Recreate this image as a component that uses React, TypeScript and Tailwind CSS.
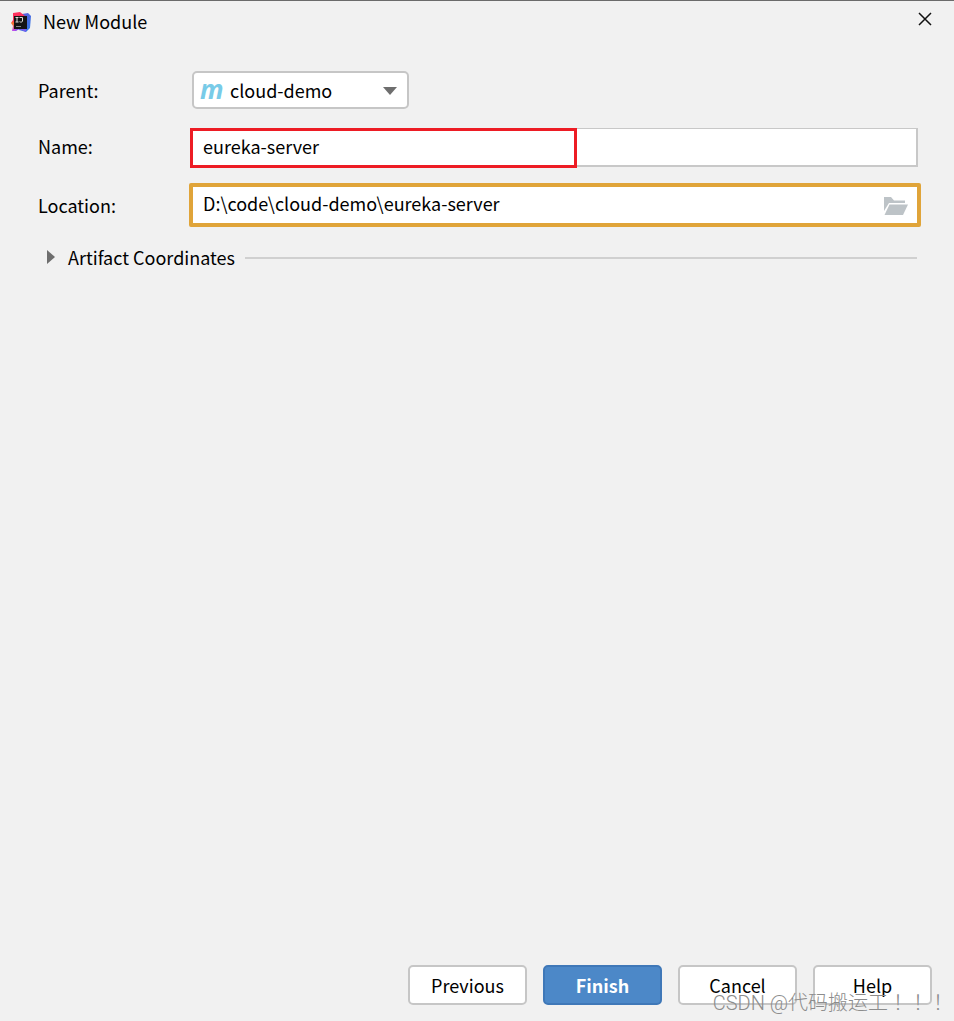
import { useState } from 'react'

const parents = ['cloud-demo']

const buttonBase = 'w-[119px] h-10 rounded-[5px] border-2 text-center leading-9'

function IdeaLogo() {
  return (
    <svg width="21" height="20" viewBox="0 0 21 20" aria-hidden="true">
      <defs>
        <linearGradient id="idea-blue" x1="0" y1="0" x2="1" y2="1">
          <stop offset="0" stopColor="#6b57d8" />
          <stop offset="1" stopColor="#2b7de9" />
        </linearGradient>
        <linearGradient id="idea-pink" x1="0" y1="0" x2="0" y2="1">
          <stop offset="0" stopColor="#fe315d" />
          <stop offset="0.45" stopColor="#fe315d" />
          <stop offset="0.6" stopColor="#f97a28" />
          <stop offset="1" stopColor="#b74af7" />
        </linearGradient>
      </defs>
      <path d="M11 2L17 1L20 4L19 16L15 20L8 18Z" fill="url(#idea-blue)" />
      <path d="M2 1L9 0L14 4L11 15L5 19L1 19L2 14L0 11L2 8Z" fill="url(#idea-pink)" />
      <path d="M4 19L6 15H15L15 20L9 17Z" fill="#7a5cf0" />
      <rect x="3" y="4" width="13" height="13" fill="#141414" />
      <path d="M4.5 5.5H7.5M6 5.5V10M4.5 10H7.5M8.5 5.5H11.5V9C11.5 10 10 10.5 8.5 9.7" fill="none" stroke="#ddd" strokeWidth="1" />
      <path d="M5 14.5H10" stroke="#888" strokeWidth="1" />
    </svg>
  )
}

function FolderIcon() {
  return (
    <svg width="24" height="18" viewBox="0 0 24 18" aria-hidden="true">
      <path d="M0 0H7L10 3.5H21V6H5L0 14Z" fill="#bdc3c7" />
      <path d="M5.5 7.5H24L19 18H0.5Z" fill="#bdc3c7" />
    </svg>
  )
}

export default function App() {
  const [name, setName] = useState('eureka-server')
  const [location, setLocation] = useState('D:\\code\\cloud-demo\\eureka-server')

  return (
    <div className="relative min-h-screen flex flex-col overflow-hidden border-t border-[#6b6b6b] bg-[#f1f1f1] font-['Noto_Sans_CJK_SC',sans-serif] text-[18px] leading-7 text-black">
      <header className="flex items-center h-[42px] pl-[11px] pr-[22px]">
        <IdeaLogo />
        <h1 className="ml-[11px] pb-0.5">New Module</h1>
        <button type="button" aria-label="Close" className="ml-auto mb-1.5">
          <svg width="14" height="14" viewBox="0 0 14 14" fill="none">
            <path d="M1 1L13 13M13 1L1 13" stroke="#111" strokeWidth="1.5" />
          </svg>
        </button>
      </header>

      <main className="flex-1 pt-7 pl-[38px] pr-[33px]">
        <div className="flex items-center">
          <label htmlFor="parent" className="w-[154px] shrink-0">Parent:</label>
          <div className="relative w-[217px]">
            <select id="parent" className="block w-full h-[38px] pl-9 appearance-none rounded-[5px] border-2 border-[#c6c6c6] bg-white">
              {parents.map((p) => (
                <option key={p}>{p}</option>
              ))}
            </select>
            <svg width="14" height="8" viewBox="0 0 14 8" className="absolute right-3 top-4 pointer-events-none">
              <path d="M0 0H14L7 8Z" fill="#6e6e6e" />
            </svg>
            <span aria-hidden="true" className="absolute left-2 top-1 pointer-events-none font-['Open_Sans',sans-serif] text-[26px] leading-7 font-bold italic text-[#78cbe8]">m</span>
          </div>
        </div>

        <div className="flex items-center mt-[19px]">
          <label htmlFor="name" className="w-[152px] shrink-0 pb-1">Name:</label>
          <div className="relative flex-1 mr-[3px]">
            <input
              id="name"
              value={name}
              onChange={(e) => setName(e.target.value)}
              className="block w-full h-[39px] pl-3 pb-0.5 border border-b-2 border-r-2 border-[#c8c8c8] bg-white outline-none"
            />
            {/* highlight around the module name */}
            <div className="absolute left-0 top-0 w-[387px] h-10 border-3 border-[#ed1c24] pointer-events-none" />
          </div>
        </div>

        <div className="flex items-center mt-4">
          <label htmlFor="location" className="w-[151px] shrink-0">Location:</label>
          <div className="flex items-center flex-1 h-11 pl-[10px] pr-[9px] rounded-xs border-4 border-[#e0a439] bg-white">
            <input
              id="location"
              value={location}
              onChange={(e) => setLocation(e.target.value)}
              className="flex-1 min-w-0 pb-1 outline-none"
            />
            <button type="button" aria-label="Browse" className="pt-0.5">
              <FolderIcon />
            </button>
          </div>
        </div>

        <div className="flex items-center mt-4 pl-2 pr-1">
          <button type="button" aria-expanded="false" className="flex items-center pb-0.5">
            <svg width="10" height="14" viewBox="0 0 10 14" className="mr-3">
              <path d="M1 0L9 7L1 14Z" fill="#6e6e6e" />
            </svg>
            Artifact Coordinates
          </button>
          <div className="flex-1 h-[2px] ml-[10px] bg-[#d0d0d0]" />
        </div>
      </main>

      <footer className="flex justify-end gap-4 pr-[22px] pb-4">
        <button type="button" className={`${buttonBase} border-[#c6c6c6] bg-white`}>Previous</button>
        <button type="button" className={`${buttonBase} border-[#3f78b8] bg-[#4c88c8] font-bold text-white`}>Finish</button>
        <button type="button" className={`${buttonBase} border-[#c6c6c6] bg-white`}>Cancel</button>
        <button type="button" className={`${buttonBase} border-[#c6c6c6] bg-white`}>Help</button>
      </footer>

      <div className="absolute right-1.5 bottom-1 pointer-events-none whitespace-nowrap font-['Roboto','Noto_Sans_CJK_SC',sans-serif] text-[20px] font-light leading-7 text-[#8c8c8c]">
        CSDN @代码搬运工<span className="font-['Noto_Sans_CJK_TC',sans-serif]" lang="zh-TW">！！！</span>
      </div>
    </div>
  )
}
